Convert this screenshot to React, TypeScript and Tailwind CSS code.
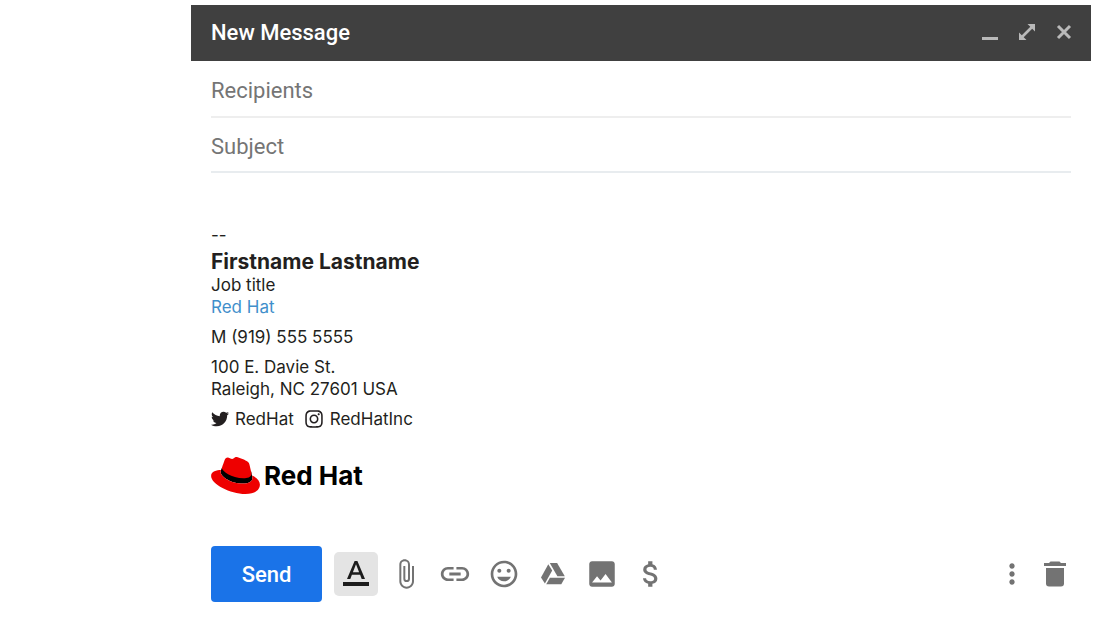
import React from "react";
import { FaInstagram, FaTwitter } from "react-icons/fa";
import {
  MdAttachFile,
  MdAttachMoney,
  MdImage,
  MdLink,
  MdMoreVert,
  MdOutlineInsertEmoticon,
} from "react-icons/md";

function IconButton({ label, children }: { label: string; children: React.ReactNode }) {
  return (
    <button type="button" aria-label={label} className="flex h-11 w-[49px] items-center justify-center">
      {children}
    </button>
  );
}

function DriveIcon() {
  return (
    <svg viewBox="0 0 24 22" className="h-[22px] w-6" fill="currentColor" aria-hidden="true">
      <path d="M7.3 1.2 11.2 7.6 3.9 20.6 0 14.4Z" />
      <path d="M8.8 0h7.3l7.7 13.2h-7.4Z" />
      <path d="M8.9 14.8H24l-3.7 6.5H5.2Z" />
    </svg>
  );
}

function TrashIcon() {
  return (
    <svg viewBox="0 0 22 26" className="h-[26px] w-[22px]" fill="currentColor" aria-hidden="true">
      <path d="M0 2h5l1.500-1.500h9L17 2h5v3H0Z" />
      <path d="M2 7h18v15.500q0 3-3 3H5q-3 0-3-3Z" />
    </svg>
  );
}

function HatLogo() {
  return (
    <svg viewBox="0 2.9 24 18.2" className="h-[37px] w-[49px]" aria-hidden="true">
      <path
        fill="#000"
        d="M5.300 8.200 4.866 9.314a2.326 2.326 0 0 0-.190.925c0 2.283 5.165 5.738 11.060 5.734 2.609 0 4.593-.980 4.593-2.745 0-.137 0-.245-.218-1.277L19.700 10Z"
      />
      <path
        fill="#e00"
        d="M16.009 13.386c1.577 0 3.860-.326 3.860-2.202a1.765 1.765 0 0 0-.040-.431l-.940-4.080c-.216-.898-.406-1.305-1.982-2.093-1.223-.625-3.888-1.658-4.676-1.658-.733 0-.947.946-1.822.946-.842 0-1.467-.706-2.255-.706-.757 0-1.250.515-1.630 1.576 0 0-1.060 2.990-1.197 3.424a.810.810 0 0 0-.028.245c0 1.162 4.577 4.974 10.710 4.974m4.101-1.435c.218 1.032.218 1.140.218 1.277 0 1.765-1.984 2.745-4.593 2.745-5.895.004-11.060-3.451-11.060-5.734a2.326 2.326 0 0 1 .190-.925C2.746 9.415 0 9.794 0 12.217c0 3.969 9.405 8.861 16.851 8.861 5.710 0 7.149-2.582 7.149-4.620 0-1.605-1.387-3.425-3.887-4.512"
      />
    </svg>
  );
}

export default function App() {
  return (
    <main className="min-h-screen bg-white pt-[5px] pr-[19px] pl-[191px] font-['Roboto',sans-serif]">
      <header className="flex h-14 items-center justify-between bg-[#404040] pr-[19px] pl-5">
        <h1 className="text-[22px] leading-7 font-medium text-white">New Message</h1>
        <div className="flex items-center gap-[21px] pb-0.5 text-[#b9b9b9]">
          <button type="button" aria-label="Minimize" className="flex size-4 items-end">
            <span className="h-[3px] w-4 bg-current" />
          </button>
          <button type="button" aria-label="Full screen" className="size-4">
            <svg viewBox="0 0 16 16" className="size-4" fill="currentColor" aria-hidden="true">
              <path d="M8.500 0H16v7.500l-2.800-2.800-8.500 8.500L7.500 16H0V8.500l2.800 2.800 8.500-8.500Z" />
            </svg>
          </button>
          <button type="button" aria-label="Close" className="size-4">
            <svg viewBox="0 0 16 16" className="size-4" fill="none" stroke="currentColor" aria-hidden="true">
              <path strokeWidth="3" d="m2 2 12 12M14 2 2 14" />
            </svg>
          </button>
        </div>
      </header>

      <form className="px-5" onSubmit={(e) => e.preventDefault()}>
        <input
          aria-label="Recipients"
          placeholder="Recipients"
          className="block h-[57px] w-full border-b-2 border-[#eeeeee] pt-1 text-[22px] text-[#757575] outline-none placeholder:text-[#757575]"
        />
        <input
          aria-label="Subject"
          placeholder="Subject"
          className="block h-[55px] w-full border-b-2 border-[#e8ecef] pt-1 text-[22px] text-[#757575] outline-none placeholder:text-[#757575]"
        />

        <section
          aria-label="Signature"
          className="pt-[51px] font-['Inter',sans-serif] text-[17px] leading-[22px] text-[#231f20]"
        >
          <p>--</p>
          <p className="pt-1 text-[21px] leading-6 font-bold">Firstname Lastname</p>
          <p>Job title</p>
          <p>
            <a href="https://www.redhat.com" className="text-[#3f8fcb]">
              Red Hat
            </a>
          </p>
          <p className="pt-2">M (919) 555 5555</p>
          <p className="pt-2">100 E. Davie St.</p>
          <p>Raleigh, NC 27601 USA</p>
          <div className="flex items-center pt-2">
            <FaTwitter className="mr-1.5 size-[18px]" aria-hidden="true" />
            <span>RedHat</span>
            <FaInstagram className="mr-1.5 ml-2.5 size-5" aria-hidden="true" />
            <span>RedHatInc</span>
          </div>
          <div className="flex items-center gap-1 pt-[27px] text-black">
            <HatLogo />
            <span className="text-[26px] leading-8 font-bold">Red Hat</span>
          </div>
        </section>

        <div className="flex items-center pt-[52px] pb-[30px] text-[#737373]">
          <button
            type="submit"
            className="mr-3 h-14 w-[111px] rounded-[4px] bg-[#1a73e8] text-[22px] font-medium text-white"
          >
            Send
          </button>
          <button
            type="button"
            aria-label="Formatting options"
            className="mr-[3px] flex size-11 items-center justify-center rounded-[5px] bg-[#e4e4e4] text-[#1c1c1c]"
          >
            <svg viewBox="0 0 26 26" className="size-[26px]" fill="currentColor" aria-hidden="true">
              <path d="M0 21h26v4H0Z" />
              <path
                fillRule="evenodd"
                d="M11.600 0h2.800L22 18h-3.300l-1.600-4.200H8.900L7.300 18H4ZM13 3.200l-3.100 8h6.200Z"
              />
            </svg>
          </button>
          <IconButton label="Attach files">
            <MdAttachFile className="size-8" />
          </IconButton>
          <IconButton label="Insert link">
            <MdLink className="size-[34px]" />
          </IconButton>
          <IconButton label="Insert emoji">
            <MdOutlineInsertEmoticon className="size-8" />
          </IconButton>
          <IconButton label="Insert files using Drive">
            <DriveIcon />
          </IconButton>
          <IconButton label="Insert photo">
            <MdImage className="size-[34px]" />
          </IconButton>
          <IconButton label="Send money">
            <MdAttachMoney className="size-[34px]" />
          </IconButton>
          <div className="ml-auto flex gap-[11px]">
            <button type="button" aria-label="More options" className="flex size-8 items-center justify-center">
              <MdMoreVert className="size-8" />
            </button>
            <button type="button" aria-label="Discard draft" className="flex size-8 items-center justify-center">
              <TrashIcon />
            </button>
          </div>
        </div>
      </form>
    </main>
  );
}
